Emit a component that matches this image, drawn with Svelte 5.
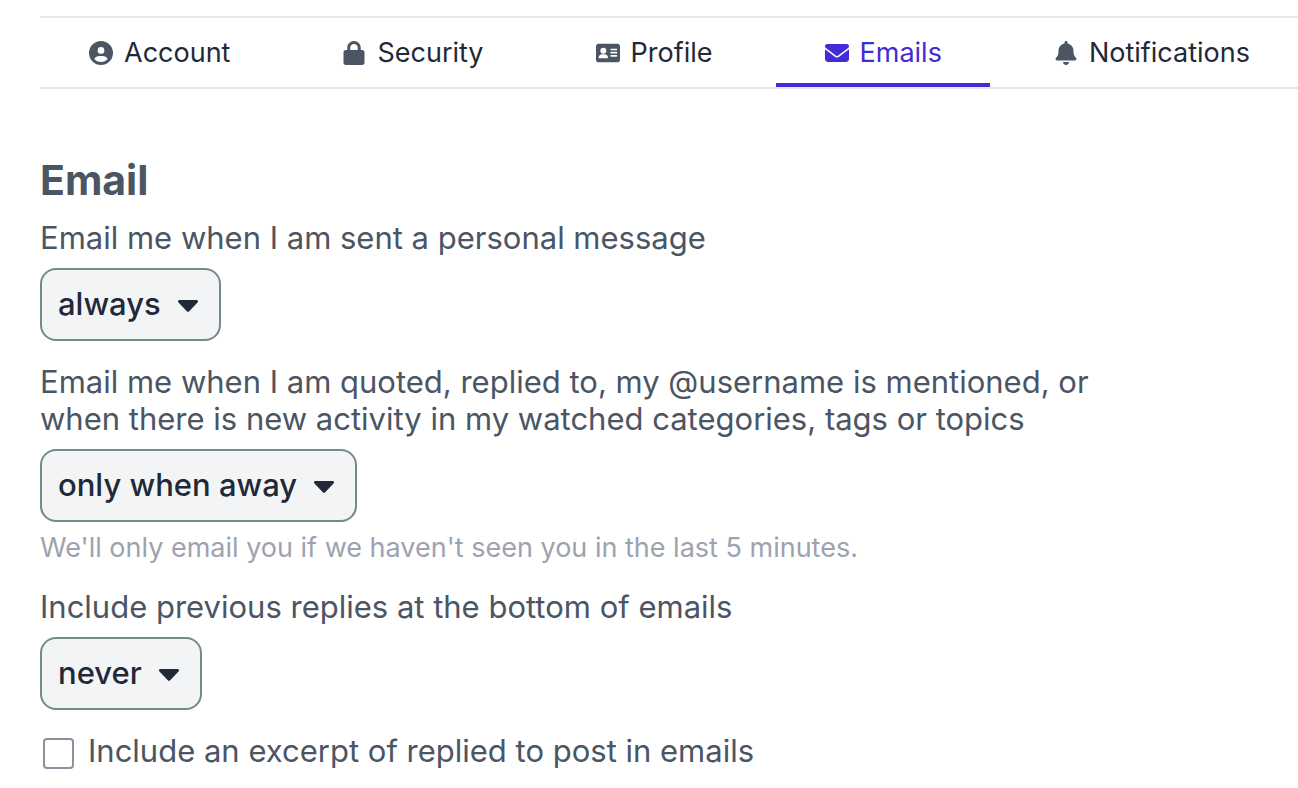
<script lang="ts">
	const tabs = [
		{
			id: 'account',
			label: 'Account',
			viewBox: '0 0 512 512',
			path: 'M399 384.2C376.9 345.8 335.4 320 288 320H224c-47.4 0-88.9 25.8-111 64.2c35.2 39.2 86.2 63.8 143 63.8s107.8-24.7 143-63.8zM0 256a256 256 0 1 1 512 0A256 256 0 1 1 0 256zm256 16a72 72 0 1 0 0-144 72 72 0 1 0 0 144z'
		},
		{
			id: 'security',
			label: 'Security',
			viewBox: '0 0 448 512',
			path: 'M144 144v48h160v-48c0-44.200-35.800-80-80-80s-80 35.800-80 80zM80 192v-48C80 64.500 144.500 0 224 0s144 64.500 144 144v48h32c26.500 0 48 21.500 48 48v224c0 26.500-21.500 48-48 48H48c-26.500 0-48-21.500-48-48V240c0-26.500 21.500-48 48-48z'
		},
		{
			id: 'profile',
			label: 'Profile',
			viewBox: '0 0 576 512',
			path: 'M64 32C28.700 32 0 60.700 0 96V416c0 35.300 28.700 64 64 64H512c35.300 0 64-28.700 64-64V96c0-35.300-28.700-64-64-64H64zm80 256h64c44.200 0 80 35.800 80 80c0 8.800-7.200 16-16 16H80c-8.800 0-16-7.200-16-16c0-44.200 35.800-80 80-80zm-40-88a72 72 0 1 1 144 0 72 72 0 1 1-144 0zm256-48H496c8.800 0 16 9 16 20s-7.200 20-16 20H360c-8.800 0-16-9-16-20s7.200-20 16-20zm0 76H496c8.800 0 16 9 16 20s-7.200 20-16 20H360c-8.800 0-16-9-16-20s7.200-20 16-20zm0 76H496c8.800 0 16 9 16 20s-7.200 20-16 20H360c-8.800 0-16-9-16-20s7.200-20 16-20z'
		},
		{
			id: 'emails',
			label: 'Emails',
			viewBox: '0 0 512 512',
			path: 'M48 64C21.500 64 0 85.500 0 112c0 15.100 7.100 29.300 19.200 38.400L236.800 313.600c11.400 8.500 27 8.500 38.400 0L492.800 150.400c12.100-9.100 19.200-23.300 19.200-38.400c0-26.500-21.500-48-48-48H48zM0 176V384c0 35.300 28.700 64 64 64H448c35.300 0 64-28.700 64-64V176L294.400 339.200c-22.800 17.100-54 17.100-76.800 0L0 176z'
		},
		{
			id: 'notifications',
			label: 'Notifications',
			viewBox: '0 0 448 512',
			path: 'M224 0c-17.700 0-32 14.300-32 32V51.200C119 66 64 130.600 64 208v18.800c0 47-17.300 92.400-48.500 127.600l-7.400 8.300c-8.400 9.400-10.400 22.900-5.300 34.400S19.400 416 32 416H416c12.600 0 24-7.400 29.200-18.900s3.100-25-5.300-34.400l-7.400-8.300C401.300 319.200 384 273.900 384 226.800V208c0-77.400-55-142-128-156.800V32c0-17.700-14.300-32-32-32zm45.300 493.300c12-12 18.700-28.300 18.700-45.300H160c0 17 6.700 33.300 18.700 45.300s28.300 18.700 45.300 18.700s33.300-6.700 45.300-18.700z'
		}
	];

	const levels = ['always', 'only when away', 'never'];

	let activeTab = $state('emails');
	let messages = $state('always');
	let mentions = $state('only when away');
	let previousReplies = $state('never');
	let includeExcerpt = $state(false);
</script>

{#snippet caret()}
	<svg class="caret" viewBox="0 0 20 12" aria-hidden="true">
		<path d="M1.500 0h17c1.400 0 2 1.500 1 2.500l-8.300 8.700c-.7.800-1.700.8-2.400 0L.5 2.500C-.5 1.500.1 0 1.500 0z" />
	</svg>
{/snippet}

<nav aria-label="Preferences">
	{#each tabs as tab}
		<a
			href="#{tab.id}"
			class:active={activeTab === tab.id}
			aria-current={activeTab === tab.id ? 'page' : undefined}
			onclick={() => (activeTab = tab.id)}>
			<svg class="icon" viewBox={tab.viewBox} aria-hidden="true"><path d={tab.path} /></svg>
			<span>{tab.label}</span>
		</a>
	{/each}
</nav>

<main>
	<h1>Email</h1>

	<div class="field">
		<label for="messages">Email me when I am sent a personal message</label>
		<div class="dropdown">
			<select id="messages" bind:value={messages}>
				{#each levels as level}<option>{level}</option>{/each}
			</select>
			{@render caret()}
		</div>
	</div>

	<div class="field">
		<label for="mentions">Email me when I am quoted, replied to, my @username is mentioned, or when there is new activity in my watched categories, tags or topics</label>
		<div class="dropdown">
			<select id="mentions" bind:value={mentions}>
				{#each levels as level}<option>{level}</option>{/each}
			</select>
			{@render caret()}
		</div>
		<p class="hint">We'll only email you if we haven't seen you in the last 5 minutes.</p>
	</div>

	<div class="field">
		<label for="replies">Include previous replies at the bottom of emails</label>
		<div class="dropdown">
			<select id="replies" bind:value={previousReplies}>
				{#each levels as level}<option>{level}</option>{/each}
			</select>
			{@render caret()}
		</div>
	</div>

	<label class="check">
		<input type="checkbox" bind:checked={includeExcerpt} />
		<span>Include an excerpt of replied to post in emails</span>
	</label>
</main>

<style>
	:global(body) {
		margin: 0;
		background: #ffffff;
		color: #4b5563;
		font-family: Inter, "Liberation Sans", sans-serif;
		font-size: 31px;
		overflow-x: hidden;
	}

	nav {
		display: flex;
		gap: 15px;
		margin: 16px 0 0 40px;
		border-top: 2px solid #e5e7eb;
		border-bottom: 2px solid #e5e7eb;
	}
	nav a {
		display: flex;
		flex: none;
		align-items: center;
		gap: 10px;
		padding: 4px 48px 0;
		border-bottom: 4px solid transparent;
		color: #1f2937;
		font-size: 27px;
		line-height: 61px;
		text-decoration: none;
	}
	nav a.active {
		color: #432bd6;
		border-bottom-color: #432bd6;
	}
	.icon {
		width: 24px;
		height: 24px;
		margin: 0 1px;
		fill: #4b5563;
	}
	.active .icon {
		fill: currentColor;
	}

	main {
		max-width: 1080px;
		padding: 66px 40px 0;
	}
	h1 {
		margin: 0 0 14px;
		font-size: 41px;
		font-weight: 700;
		line-height: 50px;
	}

	.field {
		margin-bottom: 22px;
	}
	.field label {
		display: block;
		margin-bottom: 12px;
		line-height: 37px;
	}
	.hint {
		margin: 8px 0 0;
		color: #9ca3af;
		font-size: 27px;
		line-height: 36px;
	}

	.dropdown {
		display: grid;
		width: fit-content;
		align-items: center;
	}
	.dropdown > * {
		grid-area: 1 / 1;
	}
	select {
		appearance: none;
		field-sizing: content;
		height: 73px;
		margin: 0;
		padding: 0 58px 2px 16px;
		border: 2px solid #748a8b;
		border-radius: 16px;
		background: #f3f4f6;
		color: #1f2937;
		font: inherit;
		font-weight: 500;
		cursor: pointer;
	}
	.caret {
		justify-self: end;
		width: 20px;
		height: 12px;
		margin: 3px 23px 0 0;
		fill: #1f2937;
		pointer-events: none;
	}

	.check {
		display: flex;
		align-items: center;
		gap: 14px;
		padding-left: 3px;
		line-height: 37px;
	}
	.check input {
		appearance: none;
		flex: none;
		width: 31px;
		height: 31px;
		margin: 6px 0 0;
		border: 2px solid #8f8f9d;
		border-radius: 4px;
		background: #ffffff;
	}
	.check input:checked {
		border-color: #432bd6;
		background: #432bd6;
	}
</style>
